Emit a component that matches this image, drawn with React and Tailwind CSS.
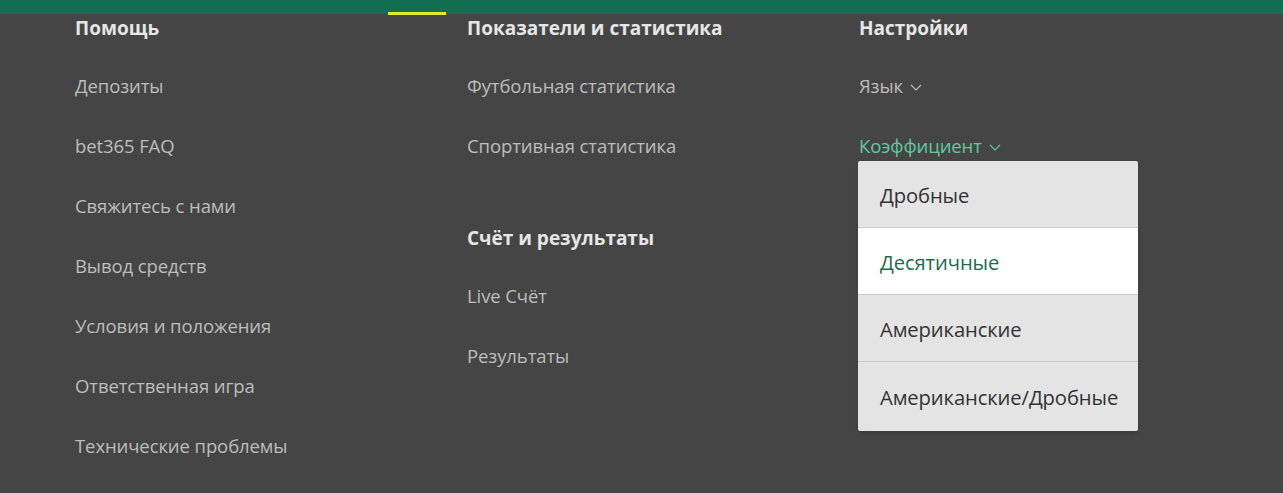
import React from "react";

const font = { fontFamily: '"Open Sans", "Noto Sans", sans-serif' };

function Header({ children }) {
  return (
    <div className="h-[28px] flex items-center text-[19px] font-bold text-[#e6e6e6] tracking-[0px]">
      {children}
    </div>
  );
}

function Link({ children, className = "" }) {
  return (
    <div className={`h-[60px] flex items-center text-[18.5px] text-[#bdbdbd] tracking-[-0.1px] ${className}`}>
      {children}
    </div>
  );
}

function Chevron({ color }) {
  return (
    <svg width="12" height="7" viewBox="0 0 12 7" className="ml-[7px] mt-[3px]">
      <path d="M1 1l5 5 5-5" fill="none" stroke={color} strokeWidth="1.1" />
    </svg>
  );
}

export default function App() {
  return (
    <div className="w-[1283px] h-[493px] bg-[#454545] relative overflow-hidden" style={font}>
      <div className="h-[14px] bg-[#126e51]" />
      <div className="absolute left-[388px] top-[12px] w-[58px] h-[3px] bg-[#e6e62e]" />
      <div className="flex pl-[75px]">
        <div className="w-[392px] flex flex-col">
          <Header>Помощь</Header>
          <div className="pt-[14px]">
            <Link>Депозиты</Link>
            <Link>bet365 FAQ</Link>
            <Link>Свяжитесь с нами</Link>
            <Link>Вывод средств</Link>
            <Link>Условия и положения</Link>
            <Link>Ответственная игра</Link>
            <Link>Технические проблемы</Link>
          </div>
        </div>
        <div className="w-[392px] flex flex-col">
          <Header>Показатели и статистика</Header>
          <div className="pt-[14px]">
            <Link>Футбольная статистика</Link>
            <Link>Спортивная статистика</Link>
          </div>
          <div className="pt-[48px]">
            <Header>Счёт и результаты</Header>
          </div>
          <div className="pt-[14px]">
            <Link>Live Счёт</Link>
            <Link>Результаты</Link>
          </div>
        </div>
        <div className="w-[300px] flex flex-col relative">
          <Header>Настройки</Header>
          <div className="pt-[14px]">
            <Link>
              Язык
              <Chevron color="#bdbdbd" />
            </Link>
            <Link className="!text-[#5fcb9e]">
              Коэффициент
              <Chevron color="#5fcb9e" />
            </Link>
          </div>
          <div className="absolute left-[-1px] top-[147px] w-[280px] bg-[#e4e4e4] rounded-[2px] shadow-md flex flex-col text-[20.2px] tracking-[-0.1px]">
            <div className="h-[67px] flex items-center pl-[22px] pt-[2px] text-[#333] border-b border-[#c8c8c8]">Дробные</div>
            <div className="h-[67px] flex items-center pl-[22px] pt-[2px] text-[#1e6b52] bg-white border-b border-[#c8c8c8]">Десятичные</div>
            <div className="h-[67px] flex items-center pl-[22px] pt-[2px] text-[#333] border-b border-[#c8c8c8]">Американские</div>
            <div className="h-[69px] flex items-center pl-[22px] pt-[2px] text-[#333]">Американские/Дробные</div>
          </div>
        </div>
      </div>
    </div>
  );
}
